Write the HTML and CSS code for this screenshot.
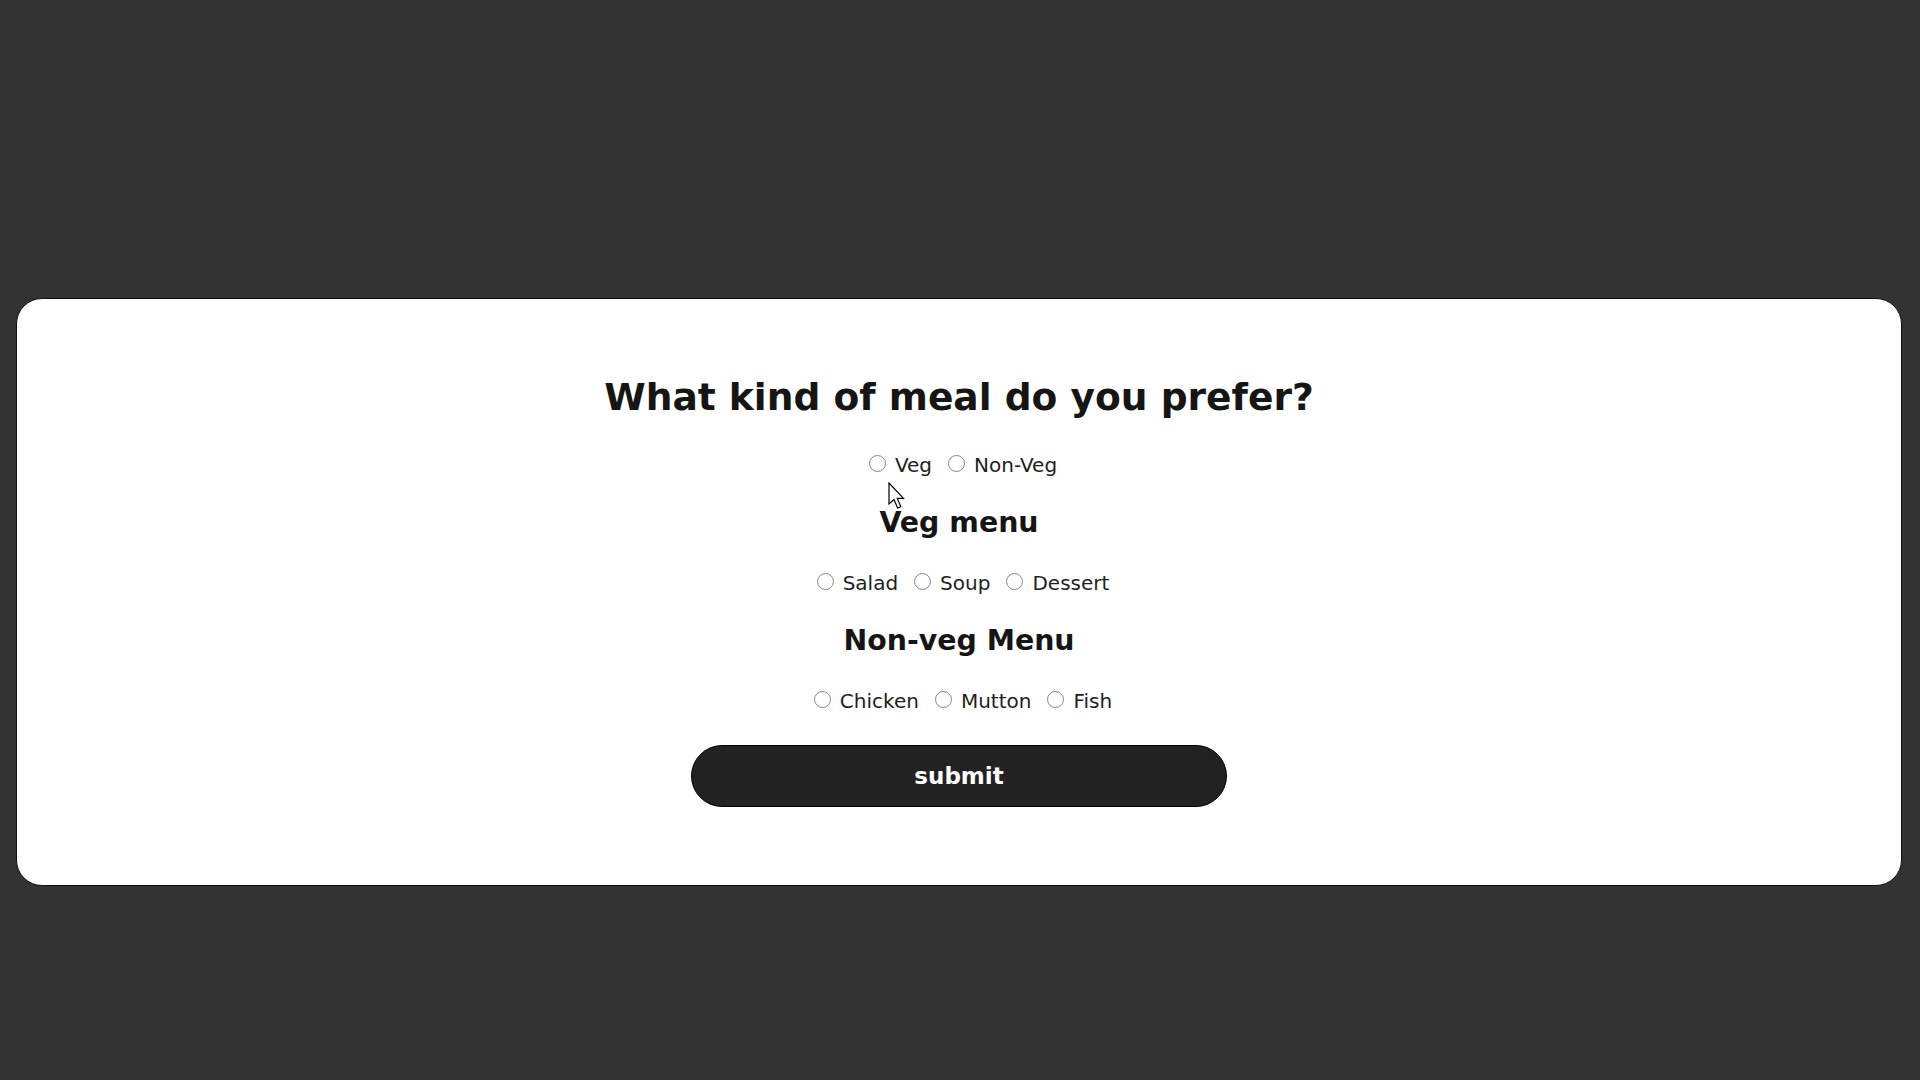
FILE: index.html
```html
<!DOCTYPE html>
<html lang="en">
<head>
<meta charset="utf-8">
<title>Meal preference</title>
<link rel="stylesheet" href="styles.css">
</head>
<body>
<main class="card">
  <h1 class="title">What kind of meal do you prefer?</h1>
  <div class="options">
    <label class="opt"><input class="radio" type="radio" name="kind"><span>Veg</span></label>
    <label class="opt"><input class="radio" type="radio" name="kind"><span>Non-Veg</span></label>
  </div>
  <h2 class="menu-title">Veg menu</h2>
  <div class="options">
    <label class="opt"><input class="radio" type="radio" name="veg"><span>Salad</span></label>
    <label class="opt"><input class="radio" type="radio" name="veg"><span>Soup</span></label>
    <label class="opt"><input class="radio" type="radio" name="veg"><span>Dessert</span></label>
  </div>
  <h2 class="menu-title">Non-veg Menu</h2>
  <div class="options">
    <label class="opt"><input class="radio" type="radio" name="nonveg"><span>Chicken</span></label>
    <label class="opt"><input class="radio" type="radio" name="nonveg"><span>Mutton</span></label>
    <label class="opt"><input class="radio" type="radio" name="nonveg"><span>Fish</span></label>
  </div>
  <button class="submit" type="button">submit</button>
</main>
<svg class="cursor" width="18" height="28" viewBox="0 0 18 28" aria-hidden="true">
  <path d="M1 1 L1 22 L6 17.5 L9.6 26 L12.8 24.6 L9.3 16.4 L15.5 16.4 Z" fill="#fff" stroke="#000" stroke-width="1.2" stroke-linejoin="miter"/>
</svg>
</body>
</html>
```
FILE: styles.css
```css
html, body {
  margin: 0;
  padding: 0;
}

body {
  background: #333333;
  padding: 298px 18px 0 16px;
  min-height: 1080px;
  box-sizing: border-box;
  font-family: "DejaVu Sans", "Liberation Sans", sans-serif;
  position: relative;
}

.card {
  background: #ffffff;
  border: 1px solid #111111;
  border-radius: 26px;
  box-sizing: border-box;
  height: 588px;
  padding: 76px 0 0;
  display: flex;
  flex-direction: column;
  align-items: center;
}

.title {
  margin: 0;
  font-size: 37.6px;
  line-height: 44px;
  font-weight: bold;
  color: #151515;
  text-align: center;
}

.options {
  display: flex;
  justify-content: center;
  gap: 16px;
  height: 24px;
  margin-top: 34px;
  padding-left: 8px;
}

.menu-title + .options {
  margin-top: 31px;
}

.opt {
  display: flex;
  align-items: center;
  gap: 9px;
  font-size: 20px;
  line-height: 24px;
  color: #1e1e1e;
}

.radio {
  appearance: none;
  -webkit-appearance: none;
  width: 17px;
  height: 17px;
  margin: 0 0 4px 0;
  border: 1.5px solid #858585;
  border-radius: 50%;
  background: #fff;
  box-sizing: border-box;
}

.menu-title {
  margin: 29px 0 0;
  font-size: 28.4px;
  line-height: 34px;
  font-weight: bold;
  color: #151515;
  text-align: center;
}

.submit {
  margin-top: 32px;
  width: 536px;
  height: 62px;
  border: 1px solid #000;
  border-radius: 31px;
  background: #222222;
  color: #ffffff;
  font-family: "DejaVu Sans", "Liberation Sans", sans-serif;
  font-size: 23px;
  font-weight: bold;
  padding: 0;
}

.cursor {
  position: absolute;
  left: 888px;
  top: 482px;
}
```
